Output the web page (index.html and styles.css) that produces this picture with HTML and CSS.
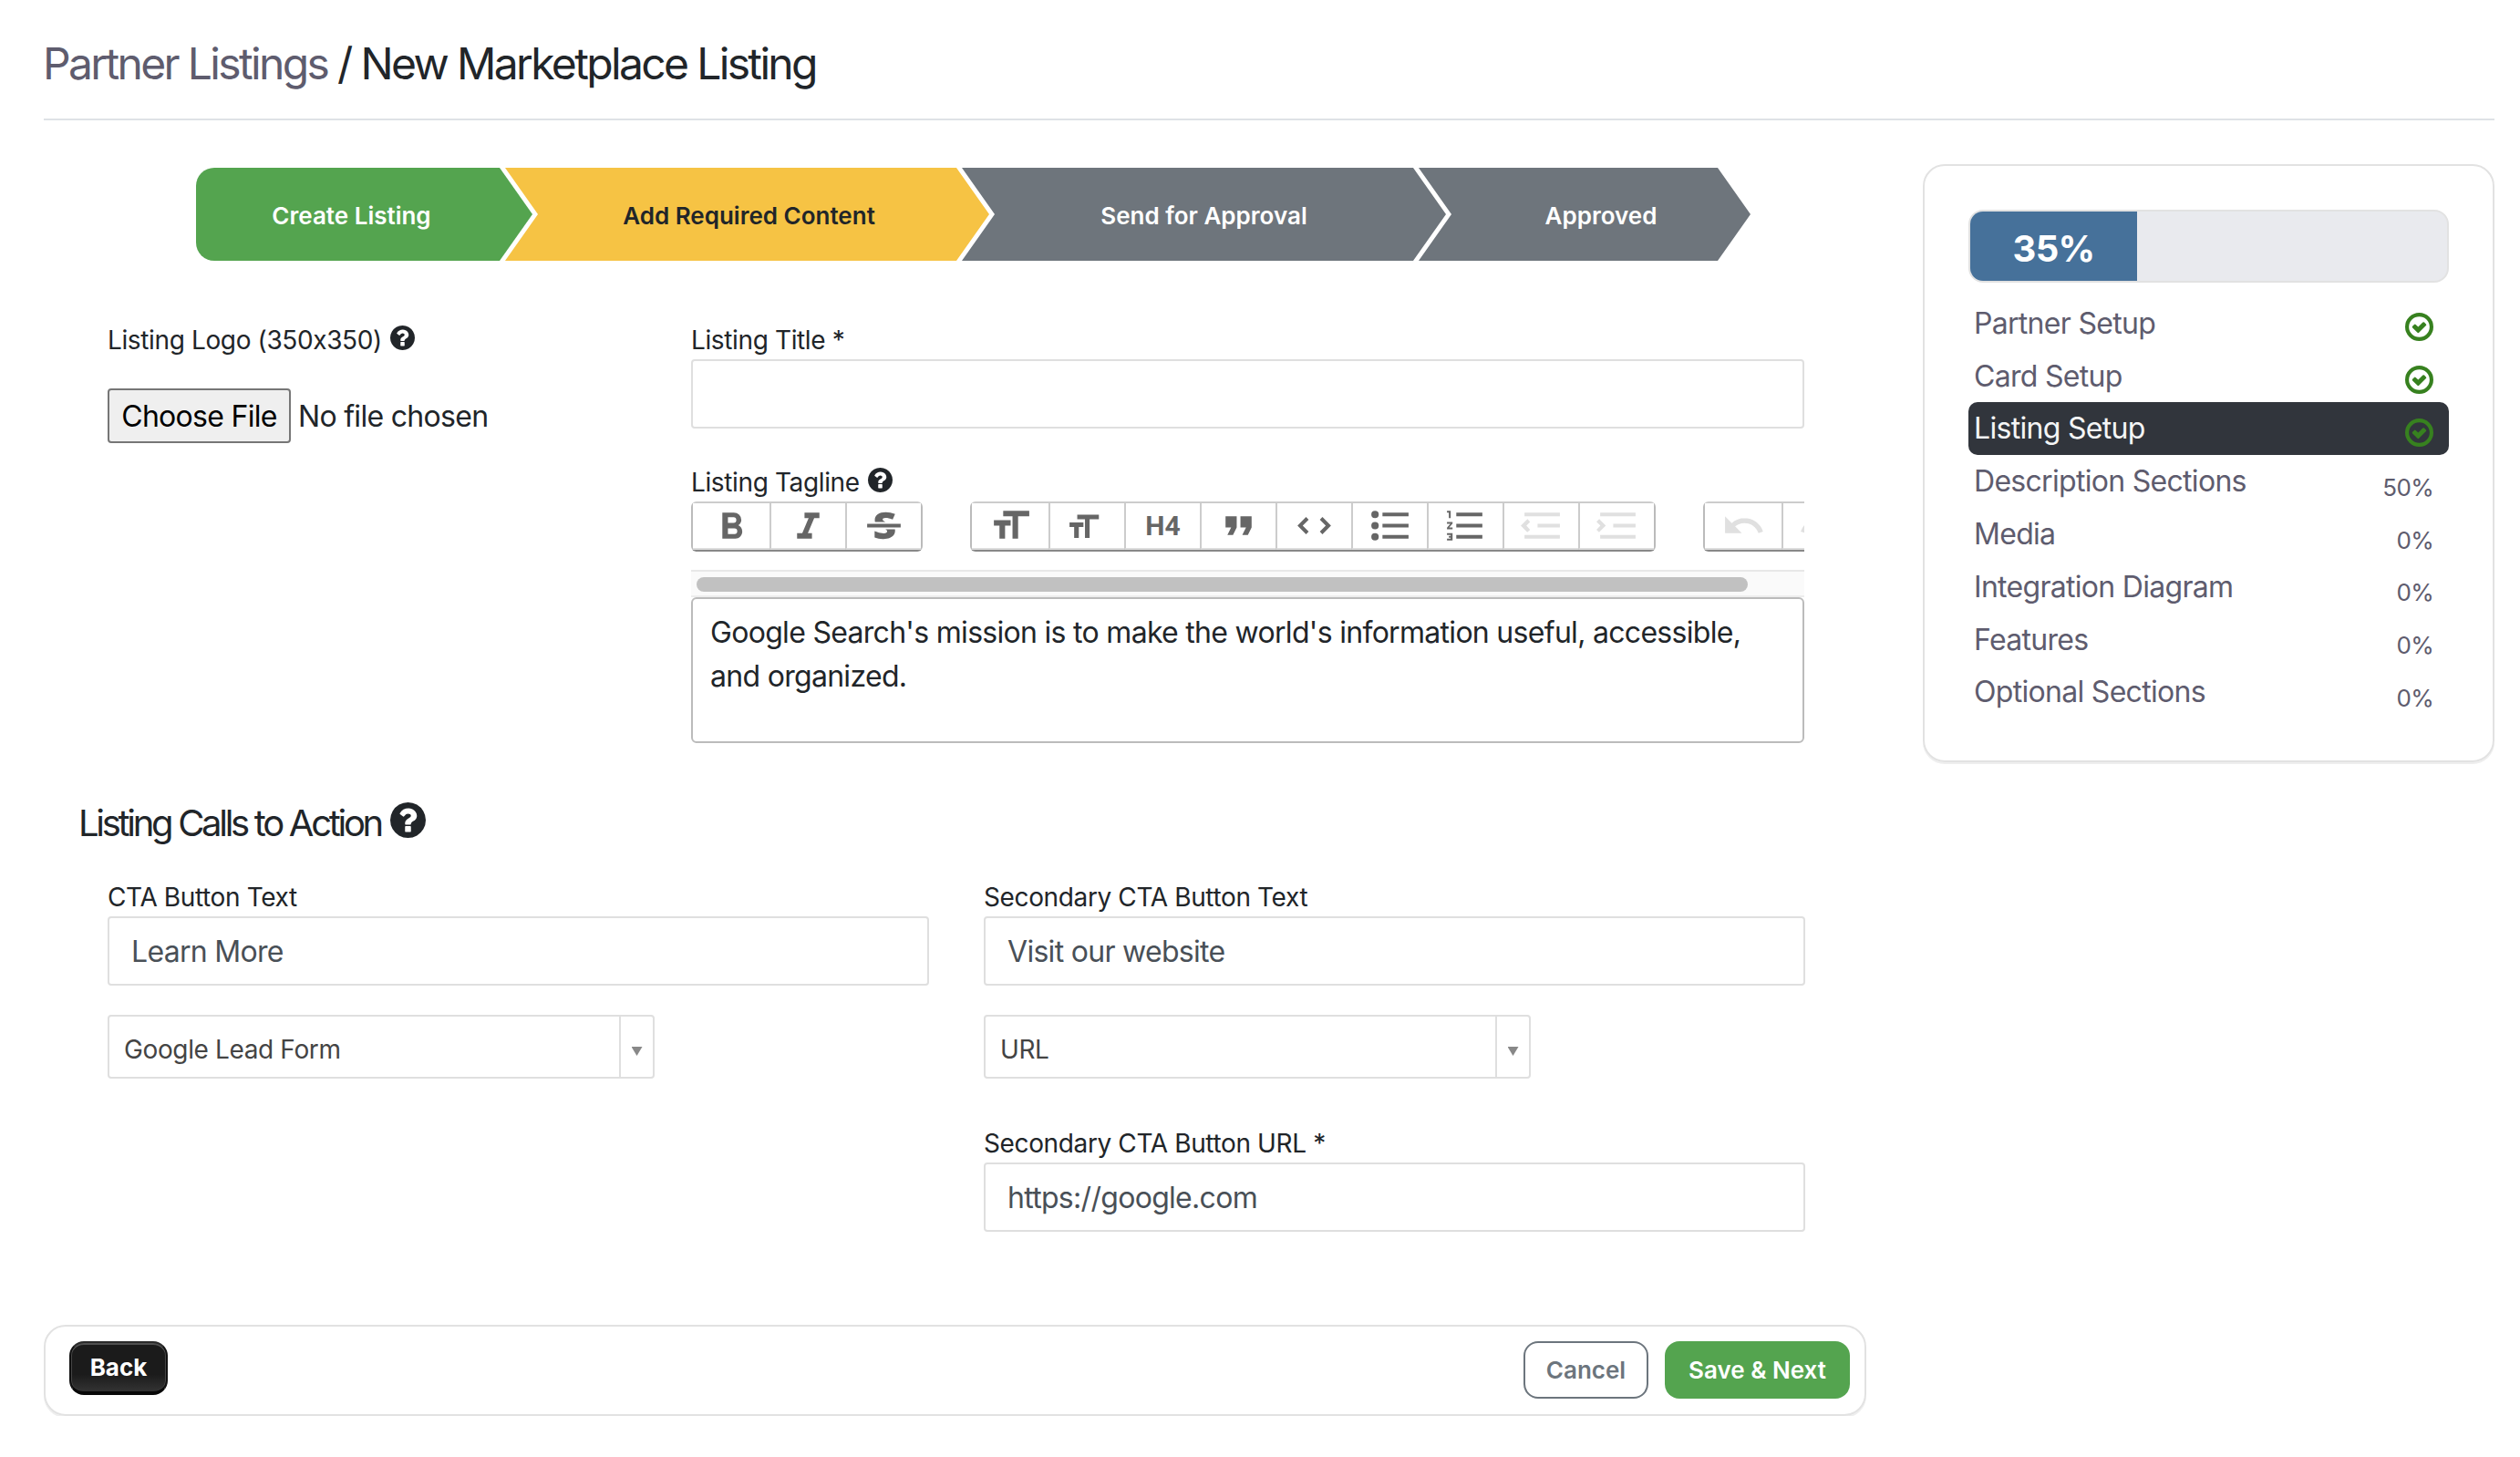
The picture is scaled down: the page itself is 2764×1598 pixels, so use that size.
FILE: index.html
```
<!DOCTYPE html>
<html lang="en">
<head>
  <meta charset="UTF-8" />
  <meta name="viewport" content="width=device-width, initial-scale=1.0"/>
  <title>New Marketplace Listing</title>
  <link rel="stylesheet" href="styles.css">
</head>
<body>
  <!-- Shared icons -->
  <svg class="defs" width="0" height="0">
    <symbol id="help" viewBox="128 128 1536 1536">
      <path d="M1024 1376v-192q0-14-9-23t-23-9h-192q-14 0-23 9t-9 23v192q0 14 9 23t23 9h192q14 0 23-9t9-23zm256-672q0-88-55.500-163t-138.500-116-170-41q-243 0-371 213-15 24 8 42l132 100q7 6 19 6 16 0 25-12 53-68 86-92 34-24 86-24 48 0 85.500 26t37.500 59q0 38-20 61t-68 45q-63 28-115.500 86.500t-52.500 125.500v36q0 14 9 23t23 9h192q14 0 23-9t9-23q0-19 21.500-49.500t54.500-49.500q32-18 49-28.500t46-35 44.500-48 28-60.500 12.500-81zm384 192q0 209-103 385.500t-279.500 279.500-385.500 103-385.500-103-279.500-279.500-103-385.500 103-385.500 279.500-279.500 385.500-103 385.500 103 279.500 279.500 103 385.500z"/>
    </symbol>
    <symbol id="check" viewBox="128 128 1536 1536">
      <circle cx="896" cy="896" r="665" fill="none" stroke="currentColor" stroke-width="205"/>
      <path transform="translate(81 86) scale(.91)" d="M1299 813l-422 422q-19 19-45 19t-45-19l-294-294q-19-19-19-45t19-45l102-102q19-19 45-19t45 19l147 147 275-275q19-19 45-19t45 19l102 102q19 19 19 45t-19 45z"/>
    </symbol>
  </svg>

  <header class="page-header">
    <h1><a href="#">Partner Listings</a> / New Marketplace Listing</h1>
  </header>

  <div class="layout">
    <main class="content">
      <div class="stepper">
        <div class="step step-first">Create Listing</div>
        <div class="step step-current">Add Required Content</div>
        <div class="step step-approval">Send for Approval</div>
        <div class="step step-last">Approved</div>
      </div>

      <div class="row listing-row">
        <div class="logo-col">
          <label>Listing Logo (350x350) <svg class="help"><use href="#help"/></svg></label>
          <div class="file-input">
            <button type="button" class="file-btn">Choose File</button>
            <span>No file chosen</span>
          </div>
        </div>
        <div class="title-col">
          <label>Listing Title *</label>
          <input type="text" class="form-control">

          <label class="tagline-label">Listing Tagline <svg class="help"><use href="#help"/></svg></label>
          <div class="toolbar">
            <div class="btn-group">
              <button type="button"><svg viewBox="0 0 24 24"><path d="M15.600 11.800c1-.7 1.600-1.800 1.600-2.800a4 4 0 0 0-4-4H7v14h7c2.100 0 3.700-1.700 3.700-3.800 0-1.500-.8-2.800-2.100-3.400zM10 7.500h3a1.500 1.500 0 1 1 0 3h-3v-3zm3.500 9H10v-3h3.500a1.500 1.500 0 1 1 0 3z"/></svg></button>
              <button type="button"><svg viewBox="0 0 24 24"><path d="M10 5v3h2.200l-3.400 8H6v3h8v-3h-2.200l3.400-8H18V5h-8z"/></svg></button>
              <button type="button"><svg viewBox="0 0 24 24"><path d="M12.730 14l.28.14c.26.15.45.3.57.44.12.14.18.3.18.5 0 .3-.15.56-.44.75-.3.2-.76.3-1.390.3A13.520 13.520 0 0 1 7 14.950v3.370a10.640 10.640 0 0 0 4.840.88c1.260 0 2.350-.19 3.280-.56.93-.37 1.640-.9 2.140-1.570s.74-1.450.74-2.320c0-.26-.02-.51-.06-.75h-5.210zm-5.500-4c-.08-.34-.12-.7-.12-1.100 0-1.290.52-2.300 1.580-3.020 1.050-.72 2.500-1.080 4.340-1.080 1.620 0 3.280.34 4.970 1l-1.300 2.930c-1.470-.6-2.730-.9-3.800-.9-.55 0-.96.08-1.200.26-.26.17-.38.38-.38.64 0 .27.16.52.48.74.17.12.53.3 1.050.53H7.230zM3 13h18v-2H3v2z"/></svg></button>
            </div>
            <div class="btn-group">
              <button type="button"><svg viewBox="0 0 24 24"><path d="M12 9v3H9v7H6v-7H3V9h9zM8 4h14v3h-6v12h-3V7H8V4z"/></svg></button>
              <button type="button"><svg viewBox="0 0 24 24"><path transform="translate(0 2.800) scale(.83)" d="M12 9v3H9v7H6v-7H3V9h9zM8 4h14v3h-6v12h-3V7H8V4z"/></svg></button>
              <button type="button" class="h4-btn">H4</button>
              <button type="button"><svg viewBox="0 0 24 24"><path d="M6 17h3l2-4V7H5v6h3zm8 0h3l2-4V7h-6v6h3z"/></svg></button>
              <button type="button"><svg viewBox="0 0 24 24"><path d="M18.200 12L15 15.200l1.400 1.400L21 12l-4.600-4.600L15 8.800l3.200 3.200zM5.800 12L9 8.800 7.600 7.400 3 12l4.600 4.600L9 15.200 5.800 12z"/></svg></button>
              <button type="button"><svg viewBox="0 0 24 24"><path d="M4 4a2 2 0 1 0 0 4 2 2 0 0 0 0-4zm0 6a2 2 0 1 0 0 4 2 2 0 0 0 0-4zm0 6a2 2 0 1 0 0 4 2 2 0 0 0 0-4zm4 3h14v-2H8v2zm0-6h14v-2H8v2zm0-8v2h14V5H8z"/></svg></button>
              <button type="button"><svg viewBox="0 0 24 24"><path d="M2 17h2v.5H3v1h1v.5H2v1h3v-4H2v1zm1-9h1V4H2v1h1v3zm-1 3h1.800L2 13.100v.9h3v-1H3.200L5 10.900V10H2v1zm5-6v2h14V5H7zm0 14h14v-2H7v2zm0-6h14v-2H7v2z"/></svg></button>
              <button type="button" disabled><svg viewBox="0 0 24 24"><path d="M3 19h19v-2H3v2zm7-6h12v-2H10v2zm-8.300-.3l2.800 2.900L6 14.200 4 12l2-2-1.400-1.500L1 12l.7.7zM3 5v2h19V5H3z"/></svg></button>
              <button type="button" disabled><svg viewBox="0 0 24 24"><path d="M3 19h19v-2H3v2zm7-6h12v-2H10v2zm-6.900-1L1 14.200l1.400 1.400L6 12l-.7-.7-2.800-2.800L1 9.900 3.100 12zM3 5v2h19V5H3z"/></svg></button>
            </div>
            <div class="btn-group">
              <button type="button" disabled><svg viewBox="0 0 24 24"><path d="M12.500 8c-2.600 0-5 1-6.900 2.600L2 7v9h9l-3.600-3.600A8 8 0 0 1 20 16l2.400-.8a10.500 10.500 0 0 0-10-7.200z"/></svg></button>
              <button type="button" disabled><svg viewBox="0 0 24 24"><path d="M18.400 10.600a10.500 10.500 0 0 0-16.900 4.600L4 16a8 8 0 0 1 12.700-3.600L13 16h9V7l-3.600 3.600z"/></svg></button>
            </div>
          </div>
          <div class="scrollbar"><div class="scrollbar-thumb"></div></div>
          <div class="editor">Google Search's mission is to make the world's information useful, accessible,<br>and organized.</div>
        </div>
      </div>

      <h2>Listing Calls to Action <svg class="help help-lg"><use href="#help"/></svg></h2>

      <div class="row cta-row">
        <div class="cta-col">
          <label>CTA Button Text</label>
          <input type="text" class="form-control" value="Learn More">
          <div class="select"><span>Google Lead Form</span><i class="arrow"></i></div>
        </div>
        <div class="cta-col">
          <label>Secondary CTA Button Text</label>
          <input type="text" class="form-control" value="Visit our website">
          <div class="select"><span>URL</span><i class="arrow"></i></div>
          <label class="url-label">Secondary CTA Button URL *</label>
          <input type="text" class="form-control" value="https://google.com">
        </div>
      </div>

      <div class="actions">
        <button type="button" class="btn btn-back">Back</button>
        <div class="actions-right">
          <button type="button" class="btn btn-cancel">Cancel</button>
          <button type="button" class="btn btn-save">Save &amp; Next</button>
        </div>
      </div>
    </main>

    <aside class="progress-card">
      <div class="progress"><div class="progress-bar" style="width: 35%">35%</div></div>
      <ul class="sections">
        <li>Partner Setup <svg class="check"><use href="#check"/></svg></li>
        <li>Card Setup <svg class="check"><use href="#check"/></svg></li>
        <li class="active">Listing Setup <svg class="check"><use href="#check"/></svg></li>
        <li>Description Sections <span class="pct">50%</span></li>
        <li>Media <span class="pct">0%</span></li>
        <li>Integration Diagram <span class="pct">0%</span></li>
        <li>Features <span class="pct">0%</span></li>
        <li>Optional Sections <span class="pct">0%</span></li>
      </ul>
    </aside>
  </div>
</body>
</html>
```
FILE: styles.css
```
* {
  margin: 0;
  padding: 0;
  box-sizing: border-box;
}

body {
  font-family: Inter, sans-serif;
  font-size: 32px;
  letter-spacing: -0.7px;
  color: #212529;
  background: #fff;
  padding: 0 28px 0 48px;
}

button, input {
  font: inherit;
  letter-spacing: inherit;
}

.defs {
  display: block;
}

.page-header {
  height: 132px;
  padding-top: 40px;
  border-bottom: 2px solid #dee2e6;
}

h1 {
  margin-left: -1px;
  font-size: 48px;
  font-weight: 400;
  line-height: 60px;
  letter-spacing: -2.65px;
}

h1 a {
  color: #5e5c6e;
  text-decoration: none;
}

.layout {
  display: flex;
  justify-content: space-between;
  align-items: flex-start;
}

.content {
  width: 1999px;
}

/* Stepper */
.stepper {
  display: flex;
  margin: 52px 0 0 167px;
}

.step {
  height: 102px;
  padding-top: 2px;
  margin-right: -30px;
  display: flex;
  align-items: center;
  justify-content: center;
  color: #fff;
  background: #6e757c;
  font-size: 26px;
  font-weight: 600;
  letter-spacing: 0;
  clip-path: polygon(0 0, calc(100% - 36px) 0, 100% 50%, calc(100% - 36px) 100%, 0 100%, 36px 50%);
}

.step-first {
  width: 369px;
  padding-right: 28px;
  background: #54a44f;
  border-radius: 20px 0 0 20px;
  clip-path: polygon(0 0, calc(100% - 36px) 0, 100% 50%, calc(100% - 36px) 100%, 0 100%);
}

.step-current {
  width: 531px;
  padding-left: 4px;
  color: #212529;
  background: #f6c344;
}

.step-approval {
  width: 531px;
}

.step-last {
  width: 364px;
  padding-left: 36px;
}

/* Form */
.row {
  display: flex;
  margin-left: 70px;
}

.listing-row {
  margin-top: 65px;
}

.logo-col {
  width: 640px;
}

.title-col {
  width: 1221px;
}

label {
  display: flex;
  align-items: center;
  height: 43px;
  font-size: 28px;
  letter-spacing: -0.37px;
}

.help {
  width: 27px;
  height: 27px;
  margin: -5px 0 0 9px;
  fill: #212529;
}

.form-control {
  display: block;
  width: 100%;
  height: 76px;
  padding: 0 24px;
  border: 2px solid #dfdfdf;
  border-radius: 4px;
  background: #fff;
  color: #495057;
}

.file-input {
  display: flex;
  align-items: center;
  gap: 8px;
  margin-top: 32px;
}

.file-btn {
  width: 201px;
  height: 60px;
  border: 2px solid #767676;
  border-radius: 4px;
  background: #efefef;
  color: #000;
}

.tagline-label {
  margin-top: 37px;
}

/* Editor toolbar */
.toolbar {
  display: flex;
  gap: 52px;
  overflow: hidden;
}

.btn-group {
  display: flex;
  flex-shrink: 0;
  height: 55px;
  border: 2px solid #bbb;
  border-top-color: #ccc;
  border-bottom-color: #888;
  border-radius: 6px;
}

.btn-group button {
  width: 83px;
  display: flex;
  align-items: center;
  justify-content: center;
  border: none;
  border-left: 2px solid #ccc;
  border-bottom: 2px solid #ddd;
  background: #fff;
}

.btn-group button:first-child {
  width: 84px;
  border-left: none;
}

.btn-group svg {
  width: 49px;
  height: 49px;
  fill: #666;
}

.btn-group button:disabled svg {
  fill: #e0e0e0;
}

.btn-group .h4-btn {
  font-family: Roboto, sans-serif;
  font-size: 30px;
  font-weight: 700;
  letter-spacing: 0;
  color: #666;
}

.scrollbar {
  height: 30px;
  margin-top: 20px;
  padding: 6px;
  border-top: 2px solid #e8e8e8;
  border-bottom: 2px solid #ededed;
  background: #fafafa;
}

.scrollbar-thumb {
  width: 1153px;
  height: 16px;
  border-radius: 8px;
  background: #c1c1c1;
}

.editor {
  height: 160px;
  padding: 13px 19px;
  border: 2px solid #bbb;
  border-radius: 6px;
  line-height: 48px;
}

/* Calls to action */
h2 {
  display: flex;
  align-items: center;
  margin: 63px 0 36px 38px;
  height: 48px;
  font-size: 40px;
  font-weight: 400;
  letter-spacing: -3.3px;
}

.help-lg {
  width: 39px;
  height: 39px;
  margin: -6px 0 0 10px;
}

.cta-row {
  gap: 60px;
}

.cta-col {
  width: 901px;
}

.select {
  display: flex;
  justify-content: space-between;
  width: 600px;
  height: 70px;
  margin-top: 32px;
  padding-left: 16px;
  border: 2px solid #dfdfdf;
  border-radius: 4px;
  color: #444;
  font-size: 28px;
  line-height: 72px;
  letter-spacing: -0.37px;
}

.arrow {
  width: 37px;
  display: flex;
  justify-content: center;
  padding-top: 33px;
  border-left: 2px solid #dfdfdf;
}

.arrow::after {
  content: "";
  width: 12px;
  height: 10px;
  background: #888;
  clip-path: polygon(0 0, 100% 0, 50% 100%);
}

.url-label {
  margin-top: 49px;
}

/* Bottom bar */
.actions {
  display: flex;
  justify-content: space-between;
  align-items: flex-start;
  height: 100px;
  margin-top: 102px;
  padding: 16px 16px 0 26px;
  border: 2px solid #e2e2e2;
  border-radius: 24px;
  box-shadow: 0 2px 0 #eee;
}

.actions-right {
  display: flex;
  gap: 18px;
}

.btn {
  height: 63px;
  border: none;
  border-radius: 16px;
  font-size: 26px;
  font-weight: 600;
  letter-spacing: 0;
}

.btn-back {
  width: 108px;
  height: 59px;
  color: #fff;
  font-weight: 700;
  background: linear-gradient(#1b1b1b 65%, #333);
  border: 2px solid #111;
  border-top-color: #2b2b2b;
  border-bottom: 4px solid #080808;
  box-shadow: inset 0 2px 0 #505050, inset 1px 0 0 #444, inset -1px 0 0 #444;
}

.btn-cancel {
  width: 137px;
  color: #6c757d;
  background: #fff;
  border: 2px solid #6c757d;
}

.btn-save {
  width: 203px;
  color: #fff;
  background: #54a44f;
}

/* Progress card */
.progress-card {
  width: 627px;
  height: 656px;
  margin-top: 48px;
  padding: 48px;
  border: 2px solid #e2e2e2;
  border-radius: 24px;
  box-shadow: 0 2px 0 #eee;
}

.progress {
  height: 80px;
  border: 2px solid #e2e2e2;
  border-radius: 16px;
  background: #e9eaee;
  overflow: hidden;
}

.progress-bar {
  height: 100%;
  padding-top: 4px;
  display: flex;
  align-items: center;
  justify-content: center;
  background: #46719a;
  color: #fff;
  font-size: 40px;
  font-weight: 700;
}

.sections {
  margin-top: 15.500px;
  list-style: none;
}

.sections li {
  display: flex;
  justify-content: space-between;
  align-items: center;
  height: 57.800px;
  padding: 0 17px 0 6px;
  border-radius: 10px;
  color: #5e5c6e;
}

.sections .active {
  background: #31353c;
  color: #f4f5f6;
}

.check {
  width: 31px;
  height: 31px;
  margin-top: 9px;
  color: #37811f;
  fill: #37811f;
}

.pct {
  padding-top: 13px;
  font-size: 26px;
}
```
